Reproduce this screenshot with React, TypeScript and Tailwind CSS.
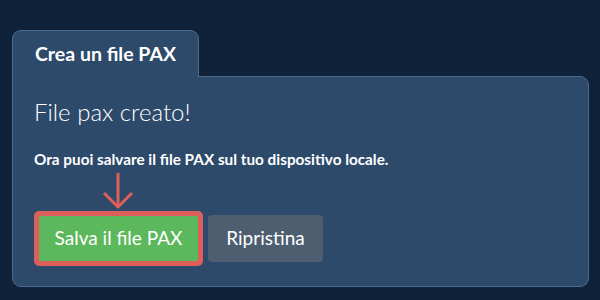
export default function App() {
  return (
    <div className="h-[300px] w-[600px] bg-[#10223a] px-3 pt-[30px] font-['Lato',sans-serif] text-white">
      <div className="relative z-10 -mb-px flex h-[47px] w-[187px] items-center rounded-t-[9px] border border-b-0 border-[#4d6b8e] bg-[#2d4a6b] pl-[22px]">
        <span className="text-[19.5px] font-bold">Crea un file PAX</span>
      </div>
      <div className="h-[211px] w-[577px] rounded-tr-[9px] rounded-b-[9px] border border-[#4d6b8e] bg-[#2d4a6b] pl-[21px] pt-[20px]">
        <h2 className="text-[24px] font-light leading-[30px]">File pax creato!</h2>
        <p className="mt-[22px] text-[15.3px] font-bold leading-[20px]">
          Ora puoi salvare il file PAX sul tuo dispositivo locale.
        </p>
        <div className="relative mt-[42px] flex items-center gap-[5px]">
          <svg
            className="absolute left-[68px] top-[-39px]"
            width="32"
            height="38"
            viewBox="0 0 32 38"
            fill="none"
            stroke="#de5f5a"
            strokeWidth="3"
          >
            <path d="M16 1v34" />
            <path d="M2 21l14 14 14-14" />
          </svg>
          <div className="rounded-[5px] bg-[#dd5f5b] p-[5px]">
            <button
              type="button"
              className="flex h-[45px] w-[159px] items-center justify-center rounded-[2px] bg-[#5cb85c] text-[19px]"
            >
              Salva il file PAX
            </button>
          </div>
          <button
            type="button"
            className="flex h-[47px] w-[115px] items-center justify-center rounded-[4px] bg-[#4d5e71] text-[19px]"
          >
            Ripristina
          </button>
        </div>
      </div>
    </div>
  );
}
